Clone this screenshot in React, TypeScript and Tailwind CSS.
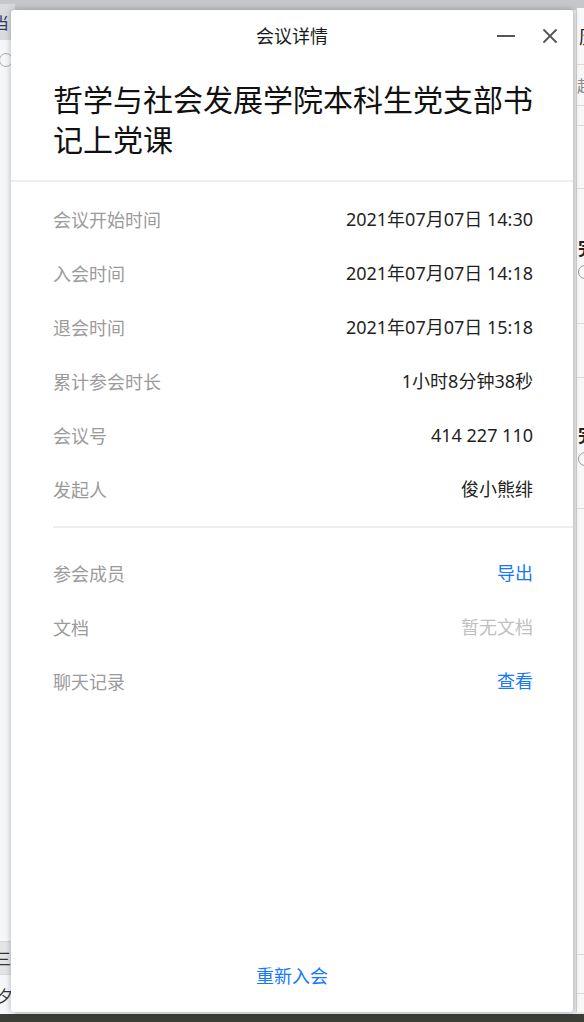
import React from "react";

const FONT = { fontFamily: '"Noto Sans CJK SC", "Noto Sans", "Liberation Sans", sans-serif' };
const VALFONT = { fontFamily: '"Noto Sans", "Noto Sans CJK SC", "Liberation Sans", sans-serif' };

function Row({ label, value, valueClass = "text-[#1f1f1f]" }: { label: string; value: string; valueClass?: string }) {
  return (
    <div className="flex h-[54px] items-center justify-between">
      <span className="text-[#9b9b9b]">{label}</span>
      <span className={valueClass} style={VALFONT}>{value}</span>
    </div>
  );
}

export default function App() {
  return (
    <div className="relative h-[1022px] w-[584px] overflow-hidden bg-[#e6e7ea]" style={FONT}>
      {/* top strip of desktop */}
      <div className="absolute left-0 top-0 h-[10px] w-[584px] bg-[#c6c7ca]" />

      {/* left background window */}
      <div className="absolute left-[-200px] top-[4px] flex h-[1011px] w-[215px] flex-col bg-[#f6f7f9]">
        <div className="flex h-[36px] items-center justify-end bg-[#d9dadd] pr-[6px]">
          <span className="text-[16px] text-[#2d3a66]">当</span>
        </div>
        <div className="flex h-[40px] items-center justify-end pr-[2px]">
          <div className="h-[14px] w-[14px] rounded-full border border-[#aaa]" />
        </div>
        <div className="flex-1" />
        <div className="h-px bg-[#d6d6d6]" />
        <div className="flex h-[32px] items-center justify-end bg-[#e4e5e7] pr-[4px] text-[16px] text-[#333]">三</div>
        <div className="h-px bg-[#d6d6d6]" />
        <div className="flex h-[40px] items-center justify-end pr-[2px] text-[16px] text-[#333]">夕</div>
      </div>

      {/* right background window */}
      <div className="absolute left-[576px] top-[8px] flex h-[1004px] w-[200px] flex-col border-l border-[#cfcfcf] bg-[#f8f8f9]">
        <div className="flex h-[56px] items-center pl-[2px] text-[18px] text-[#222]">历</div>
        <div className="h-px bg-[#dcdcdc]" />
        <div className="flex h-[40px] items-center text-[16px] text-[#888]">起</div>
        <div className="h-px bg-[#dcdcdc]" />
        <div className="h-[19px]" />
        <div className="h-px bg-[#dcdcdc]" />
        <div className="h-[62px]" />
        <div className="h-px bg-[#dcdcdc]" />
        <div className="flex h-[134px] flex-col justify-center pl-[1px]">
          <span className="text-[18px] font-bold text-[#222]">完</span>
          <div className="mt-[4px] h-[14px] w-[14px] rounded-full border border-[#999]" />
        </div>
        <div className="h-px bg-[#dcdcdc]" />
        <div className="h-[53px]" />
        <div className="h-px bg-[#dcdcdc]" />
        <div className="flex h-[130px] flex-col justify-center pl-[1px]">
          <span className="text-[18px] font-bold text-[#222]">完</span>
          <div className="mt-[4px] h-[14px] w-[14px] rounded-full border border-[#999]" />
        </div>
        <div className="h-px bg-[#dcdcdc]" />
        <div className="flex-1" />
        <div className="h-px bg-[#dcdcdc]" />
        <div className="h-[38px]" />
        <div className="h-px bg-[#dcdcdc]" />
        <div className="h-[18px]" />
      </div>

      {/* bottom dark taskbar */}
      <div className="absolute bottom-0 left-0 h-[8px] w-[584px] bg-[#3b3e36]" />

      {/* dialog */}
      <div className="absolute left-[11px] top-[10px] flex h-[1002px] w-[562px] flex-col rounded-[3px] bg-white text-[18px] shadow-[0_0_6px_rgba(0,0,0,0.28)]">
        <div className="grid h-[51px] grid-cols-[1fr_auto_1fr] items-center">
          <div />
          <div className="text-[18px] text-[#1a1a1a]">会议详情</div>
          <div className="flex items-center justify-end gap-[26px] pr-[15px]">
            <svg width="20" height="20" viewBox="0 0 20 20">
              <line x1="1" y1="10" x2="19" y2="10" stroke="#555" strokeWidth="2" />
            </svg>
            <svg width="16" height="16" viewBox="0 0 16 16">
              <path d="M2 2 L14 14 M14 2 L2 14" stroke="#555" strokeWidth="1.8" strokeLinecap="round" />
            </svg>
          </div>
        </div>

        <div className="pb-[22px] pl-[42px] pr-[38px] pt-[17px] text-[30px] leading-[40px] text-[#111]">
          哲学与社会发展学院本科生党支部书记上党课
        </div>

        <div className="h-[2px] bg-[#eeeeee]" />

        <div className="pl-[42px] pr-[40px] pt-[10px]">
          <Row label="会议开始时间" value="2021年07月07日 14:30" />
          <Row label="入会时间" value="2021年07月07日 14:18" />
          <Row label="退会时间" value="2021年07月07日 15:18" />
          <Row label="累计参会时长" value="1小时8分钟38秒" />
          <Row label="会议号" value="414 227 110" />
          <Row label="发起人" value="俊小熊绯" />
        </div>

        <div className="ml-[42px] mt-[10px] h-[2px] bg-[#eeeeee]" />

        <div className="pl-[42px] pr-[40px] pt-[18px]">
          <Row label="参会成员" value="导出" valueClass="text-[#1677ff]" />
          <Row label="文档" value="暂无文档" valueClass="text-[#c0c0c0]" />
          <Row label="聊天记录" value="查看" valueClass="text-[#1677ff]" />
        </div>

        <div className="flex-1" />

        <div className="flex h-[74px] items-center justify-center">
          <span className="text-[18px] text-[#1677ff]">重新入会</span>
        </div>
      </div>
    </div>
  );
}
